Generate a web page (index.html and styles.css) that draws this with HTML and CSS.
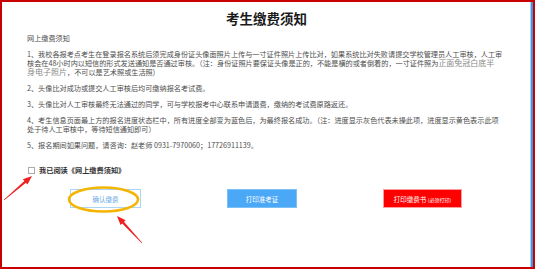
FILE: index.html
```html
<!DOCTYPE html>
<html>

<head>
	<meta charset="utf-8">
	<title>考生缴费须知</title>
	<link rel="stylesheet" href="styles.css">
</head>

<body>
	<div id="frame">
		<div id="page">
			<h1 class="title">考生缴费须知</h1>
			<div class="notice">
				<p class="notice-head">网上缴费须知</p>
				<p>1、我校各报考点考生在登录报名系统后须完成身份证头像面照片上传与一寸证件照片上传比对，如果系统比对失败请提交学校管理员人工审核，人工审<br>核会在48小时内以短信的形式发送通知是否通过审核。（注：身份证照片要保证头像是正的，不能是横的或者倒着的，一寸证件照为<span class="serif">正面免冠白底半<br>身电子照片</span>，不可以是艺术照或生活照)</p>
				<p>2、头像比对成功或提交人工审核后均可缴纳报名考试费。</p>
				<p>3、头像比对人工审核最终无法通过的同学，可与学校报考中心联系申请退费，缴纳的考试费原路返还。</p>
				<p>4、考生信息页面最上方的报名进度状态栏中，所有进度全部变为蓝色后，为最终报名成功。（注：进度显示灰色代表未操此项，进度显示黄色表示此项<br>处于待人工审核中，等待短信通知即可）</p>
				<p>5、报名期间如果问题，请咨询：赵老师 0931-7970060；17726911139。</p>
			</div>
			<label class="agree"><input type="checkbox" id="chkRead"> 我已阅读《网上缴费须知》</label>
			<div class="actions">
				<button class="btn btn-confirm">确认缴费</button>
				<button class="btn btn-ticket">打印准考证</button>
				<button class="btn btn-bill">打印缴费书 <small>(必须打印)</small></button>
			</div>
		</div>
	</div>

	<!-- annotations drawn over the page -->
	<svg class="marks" width="536" height="270" viewBox="0 0 536 270">
		<ellipse cx="103.5" cy="199.5" rx="34.5" ry="12" fill="none" stroke="#f5b400" stroke-width="2.5" />
		<polygon fill="#f02020" points="4.2,200.2 25.95,182.76 27.45,184.5 32,176 22.9,179.2 24.39,180.94 3.8,199.8" />
		<polygon fill="#f02020" points="142.22,242.8 123.99,221.79 125.68,220.22 117,216 120.54,224.98 122.23,223.41 141.78,243.2" />
	</svg>
</body>

</html>
```

FILE: styles.css
```css
body {
	margin: 0;
	position: relative;
	font-family: "Noto Sans CJK SC", "Noto Sans", sans-serif;
	color: #4d4d4d;
	background-color: #fff;
}

#frame {
	width: 535px;
	height: 269px;
	box-sizing: border-box;
	border: 2px solid #c80000;
	overflow: hidden;
}

#page {
	height: 100%;
	box-sizing: border-box;
	padding-top: 6px;
	border-right: 2px solid #3f95e6;
	box-shadow: inset -1px 0 #a6d3f6;
}

.title {
	margin: 0;
	font-size: 13.5px;
	line-height: 20px;
	text-align: center;
	color: #1a1a1a;
	font-weight: bold;
}

.notice {
	margin: 6px 0 0 25px;
	width: 500px;
	font-size: 7.15px;
	line-height: 9px;
}

.notice p {
	margin: 7px 0 0 0;
}

.notice p.notice-head {
	margin-top: 0;
}

.serif {
	font-family: "Liberation Serif", "Noto Sans CJK SC", serif;
	font-size: 8px;
	line-height: 9px;
	color: #888;
}

.agree {
	display: flex;
	align-items: center;
	gap: 4px;
	margin: 16px 0 0 26px;
	font-size: 7.2px;
	line-height: 9px;
	font-weight: bold;
	color: #333;
}

.agree input {
	appearance: none;
	margin: 0;
	width: 7px;
	height: 7px;
	border: 1px solid #aaa;
	background: #fff;
}

.actions {
	display: flex;
	gap: 86px;
	margin: 14px 0 0 68px;
}

.btn {
	height: 19px;
	padding: 0;
	font-family: inherit;
	font-size: 6.5px;
	border: 1px solid transparent;
}

.btn-confirm {
	width: 71px;
	background: #fff;
	border-color: #a9d6f6;
	color: #6aa8e6;
}

.btn-ticket {
	width: 70px;
	background: #4aa8f7;
	border-color: #7cc0f8;
	color: #fff;
}

.btn-bill {
	width: 79px;
	background: #ff0000;
	border-color: #ff9c9c;
	color: #fff;
}

.btn-bill small {
	font-size: 5px;
}

.marks {
	position: absolute;
	left: 0;
	top: 0;
}
```
